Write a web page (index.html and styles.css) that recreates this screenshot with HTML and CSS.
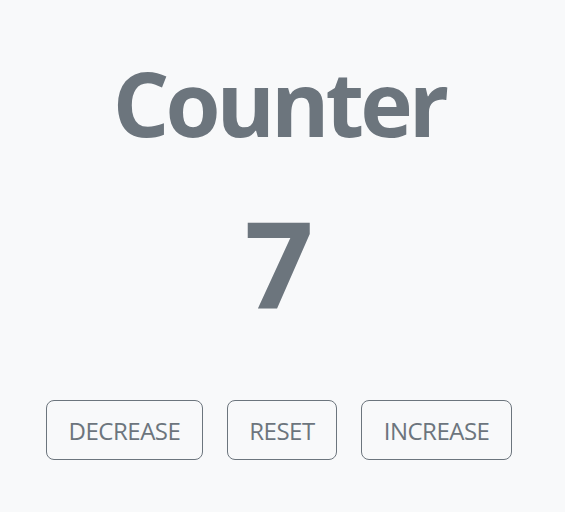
FILE: index.html
```html
<!DOCTYPE html>
<html>
<head>
<meta charset="utf-8">
<link rel="stylesheet" href="styles.css">
</head>
<body>
<main class="counter">
  <h1 class="title">Counter</h1>
  <div class="value">7</div>
  <div class="actions">
    <button class="btn">DECREASE</button>
    <button class="btn">RESET</button>
    <button class="btn">INCREASE</button>
  </div>
</main>
</body>
</html>
```
FILE: styles.css
```css
html, body {
  margin: 0;
  padding: 0;
  background: #f8f9fa;
  height: 100%;
}
body {
  font-family: "Open Sans", "Noto Sans", sans-serif;
  color: #6c757d;
}
.counter {
  display: flex;
  flex-direction: column;
  align-items: center;
  padding: 48px 7px 0 0;
}
.title {
  margin: 0;
  font-size: 89px;
  font-weight: 700;
  line-height: 110px;
  letter-spacing: -4px;
}
.value {
  margin-top: 34px;
  font-size: 121px;
  font-weight: 700;
  line-height: 140px;
}
.actions {
  display: flex;
  gap: 24px;
  margin-top: 68px;
}
.btn {
  font-family: inherit;
  font-size: 24px;
  color: #6c757d;
  background: transparent;
  border: 1px solid #6c757d;
  border-radius: 8px;
  height: 60px;
  padding: 0 21.5px;
  letter-spacing: -0.5px;
}
```
